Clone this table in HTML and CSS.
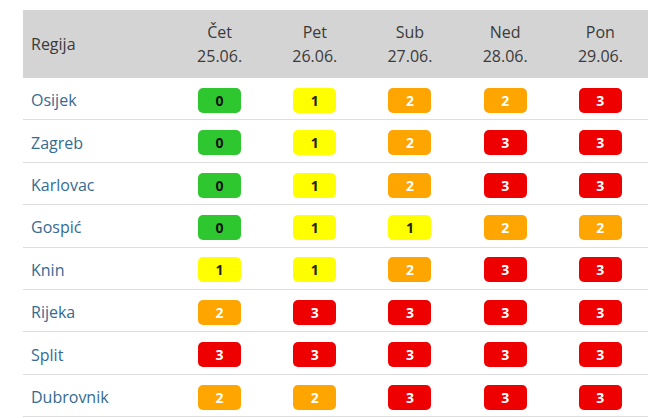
FILE: index.html
```html
<!DOCTYPE html>
<html lang="hr">
<head>
<meta charset="utf-8">
<link rel="stylesheet" href="styles.css">
</head>
<body>
<table class="forecast">
  <thead>
    <tr>
      <th class="region-head">Regija</th>
      <th>Čet<br>25.06.</th>
      <th>Pet<br>26.06.</th>
      <th>Sub<br>27.06.</th>
      <th>Ned<br>28.06.</th>
      <th>Pon<br>29.06.</th>
    </tr>
  </thead>
  <tbody>
    <tr><td class="region">Osijek</td><td><span class="b l0">0</span></td><td><span class="b l1">1</span></td><td><span class="b l2">2</span></td><td><span class="b l2">2</span></td><td><span class="b l3">3</span></td></tr>
    <tr><td class="region">Zagreb</td><td><span class="b l0">0</span></td><td><span class="b l1">1</span></td><td><span class="b l2">2</span></td><td><span class="b l3">3</span></td><td><span class="b l3">3</span></td></tr>
    <tr><td class="region">Karlovac</td><td><span class="b l0">0</span></td><td><span class="b l1">1</span></td><td><span class="b l2">2</span></td><td><span class="b l3">3</span></td><td><span class="b l3">3</span></td></tr>
    <tr><td class="region">Gospić</td><td><span class="b l0">0</span></td><td><span class="b l1">1</span></td><td><span class="b l1">1</span></td><td><span class="b l2">2</span></td><td><span class="b l2">2</span></td></tr>
    <tr><td class="region">Knin</td><td><span class="b l1">1</span></td><td><span class="b l1">1</span></td><td><span class="b l2">2</span></td><td><span class="b l3">3</span></td><td><span class="b l3">3</span></td></tr>
    <tr><td class="region">Rijeka</td><td><span class="b l2">2</span></td><td><span class="b l3">3</span></td><td><span class="b l3">3</span></td><td><span class="b l3">3</span></td><td><span class="b l3">3</span></td></tr>
    <tr><td class="region">Split</td><td><span class="b l3">3</span></td><td><span class="b l3">3</span></td><td><span class="b l3">3</span></td><td><span class="b l3">3</span></td><td><span class="b l3">3</span></td></tr>
    <tr><td class="region">Dubrovnik</td><td><span class="b l2">2</span></td><td><span class="b l2">2</span></td><td><span class="b l3">3</span></td><td><span class="b l3">3</span></td><td><span class="b l3">3</span></td></tr>
  </tbody>
</table>
</body>
</html>
```
FILE: styles.css
```css
html, body {
  margin: 0;
  padding: 0;
  background: #ffffff;
}
body {
  padding: 10px 0 0 23px;
  font-family: "Open Sans", "Liberation Sans", sans-serif;
  font-size: 16px;
  color: #333333;
}
.forecast {
  border-collapse: collapse;
  width: 625px;
  table-layout: fixed;
}
.forecast th {
  background: #d4d4d4;
  font-weight: normal;
  line-height: 24px;
  height: 68px;
  padding: 0;
  text-align: center;
  color: #3a3a3a;
}
.forecast th.region-head {
  width: 141px;
  text-align: left;
  padding-left: 8px;
}
.forecast td {
  height: 38.4px;
  padding: 3px 0 0 0;
  text-align: center;
  border-bottom: 1px solid #dedede;
}
.forecast td.region {
  text-align: left;
  padding-left: 8px;
  color: #356b91;
}
.b {
  display: inline-block;
  width: 43px;
  height: 25px;
  line-height: 25px;
  border-radius: 5px;
  font-size: 14px;
  font-weight: bold;
  vertical-align: middle;
}
.l0 { background: #2fc72f; color: #111; }
.l1 { background: #ffff00; color: #222; }
.l2 { background: #ffa500; color: #ffffff; }
.l3 { background: #ee0000; color: #ffffff; }
```
